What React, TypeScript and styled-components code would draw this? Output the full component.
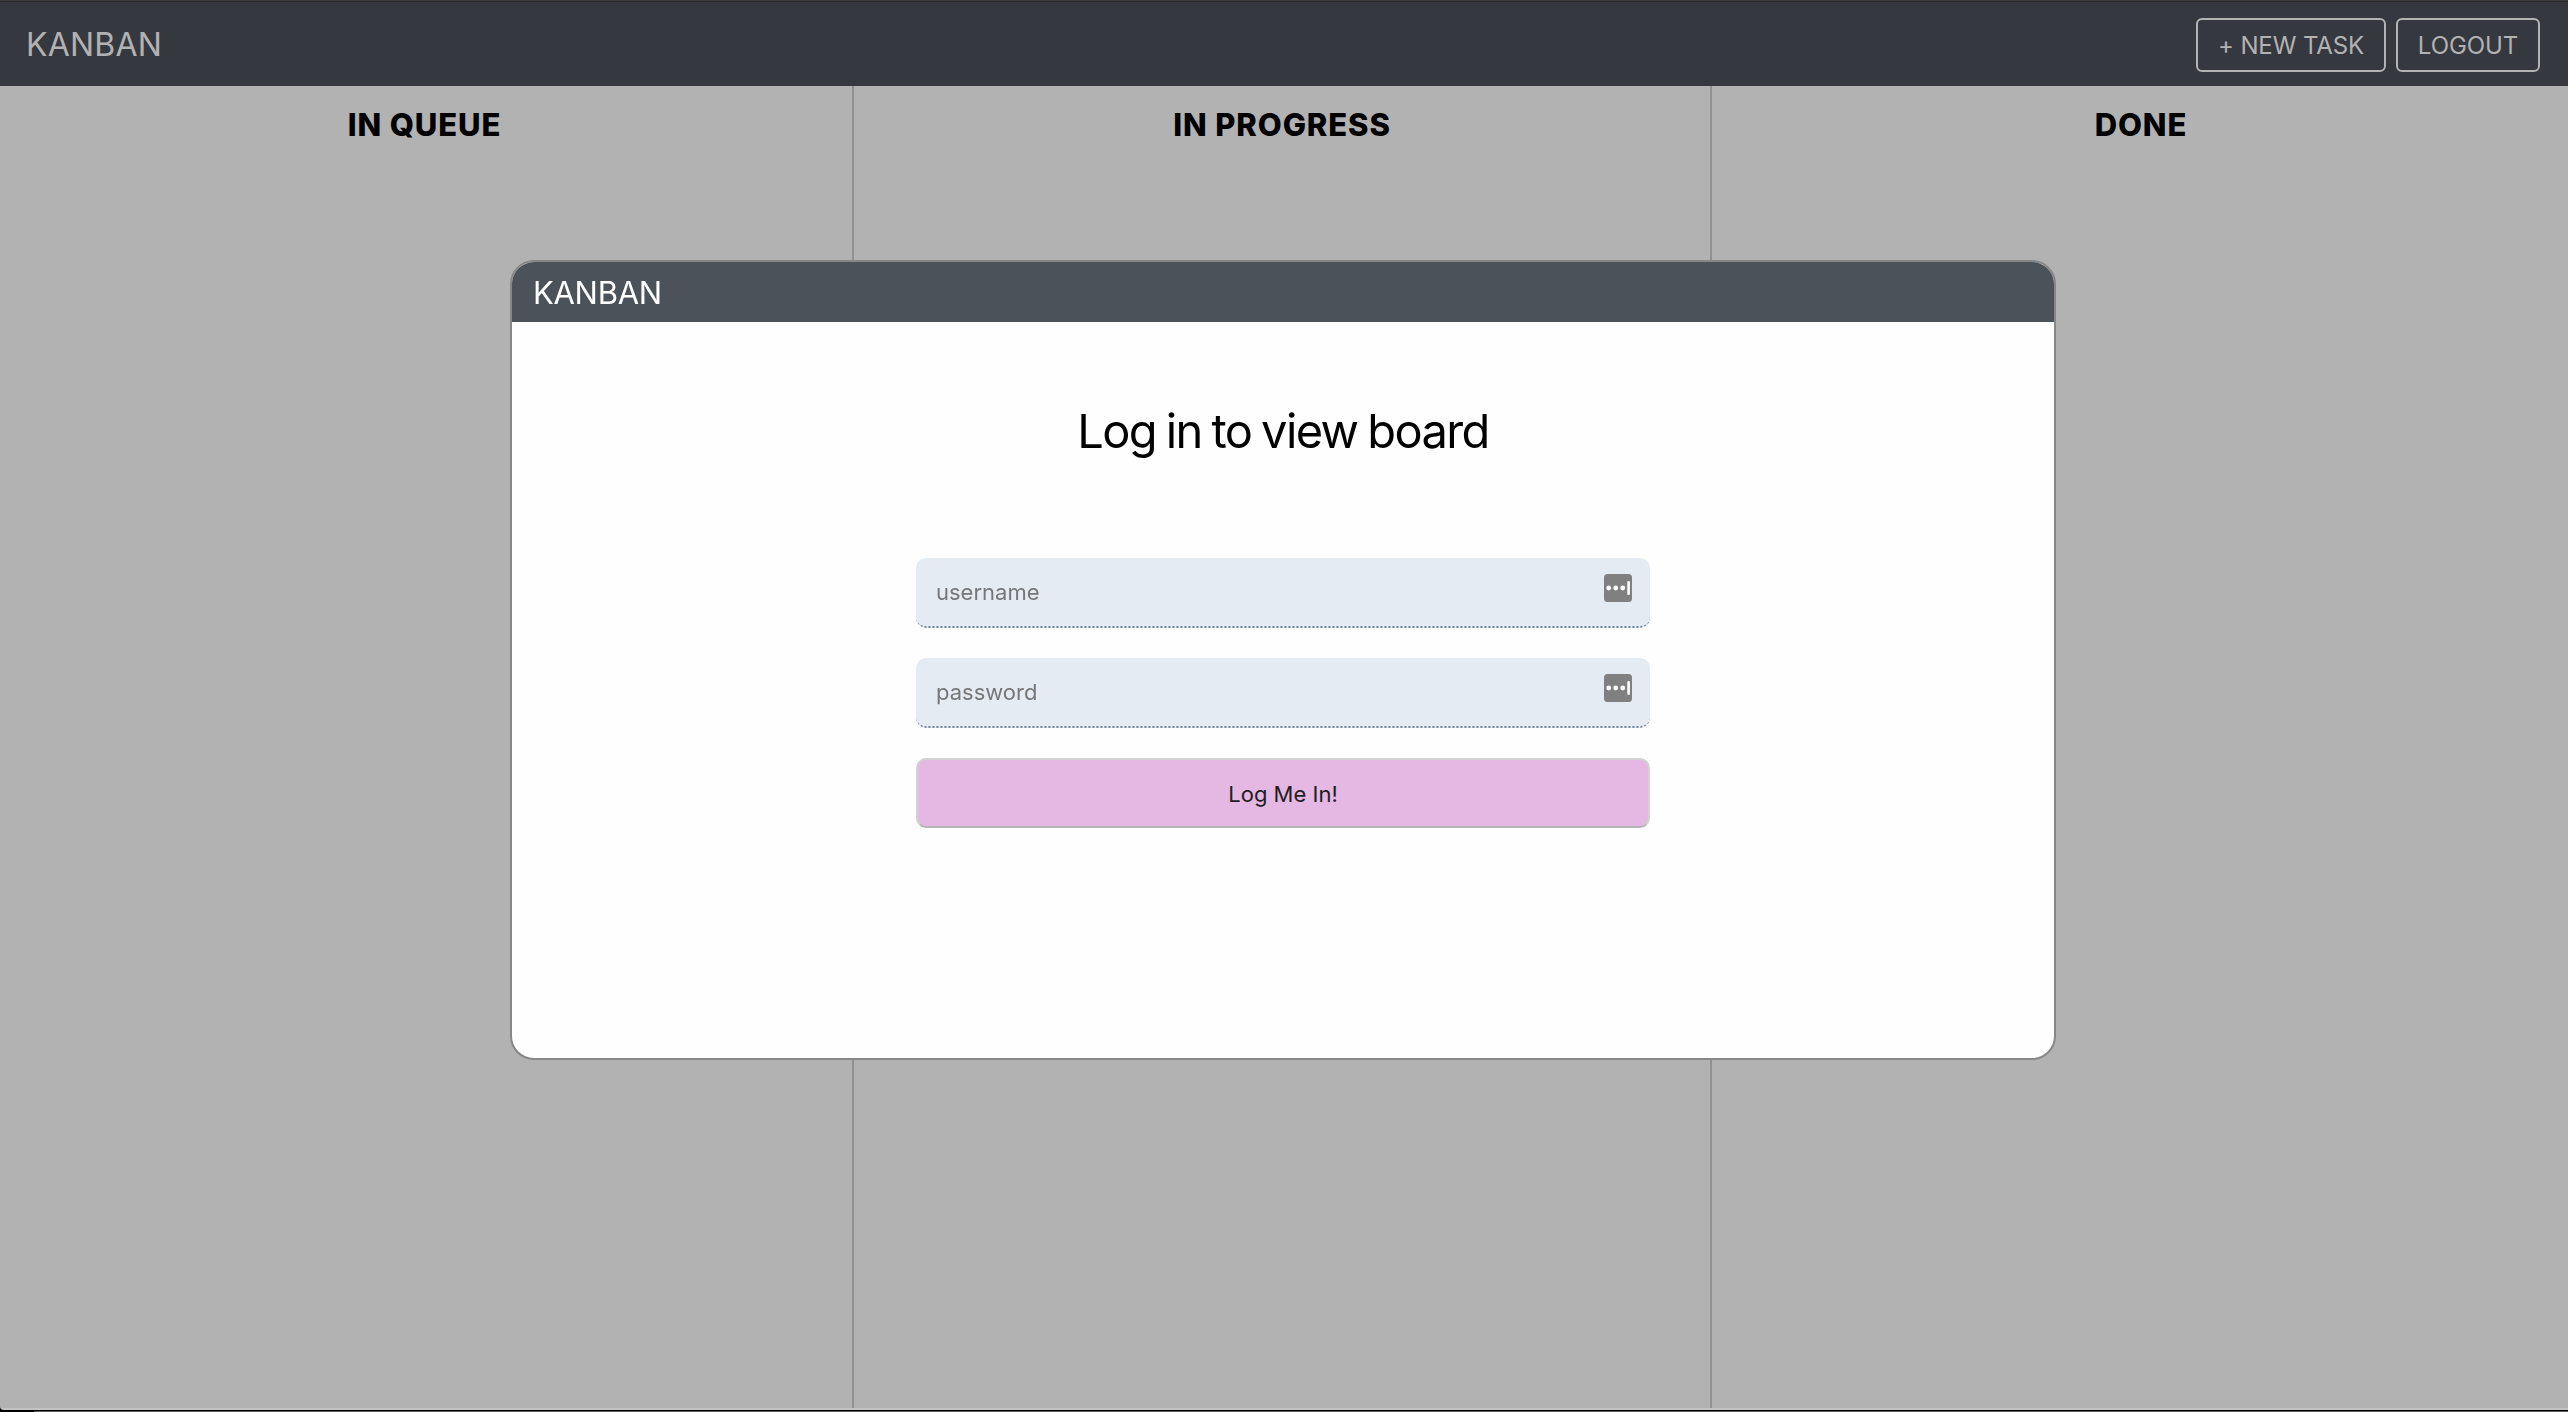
import React from "react";
import styled, { createGlobalStyle } from "styled-components";

const GlobalStyle = createGlobalStyle`
  * { box-sizing: border-box; }
  body { margin: 0; background: #b2b2b2; font-family: Inter, "Liberation Sans", sans-serif; }
  button, input { font: inherit; margin: 0; }
`;

const Page = styled.div`
  display: flex;
  flex-direction: column;
  height: 1412px;
  overflow: hidden;
  border-top: 1px solid #3a3a3a;
  background: #000;
`;

const NavBar = styled.header`
  display: flex;
  align-items: center;
  justify-content: space-between;
  flex: none;
  height: 85px;
  padding: 2px 28px 0 26px;
  background: #363840;
  border-top: 1px solid #2a2a2a;
`;

const Brand = styled.span`
  font-size: 32px;
  line-height: 40px;
  letter-spacing: 0.2px;
  color: #b2b2b2;
`;

const Actions = styled.div`
  display: flex;
  gap: 10px;
`;

const NavButton = styled.button<{ $width: number }>`
  width: ${(p) => p.$width}px;
  height: 54px;
  padding: 1px 0 0;
  border: 2px solid #b2b2b2;
  border-radius: 6px;
  background: transparent;
  color: #b2b2b2;
  font-size: 24px;
  letter-spacing: -0.1px;
  white-space: nowrap;
`;

const Board = styled.main`
  display: grid;
  grid-template-columns: 854px 858px 1fr;
  flex: 1;
  background: #b2b2b2;
  border-bottom: 2px solid #c2c2c2;
  border-bottom-left-radius: 4px;
`;

const PageEdge = styled.footer`
  flex: none;
  height: 2px;
  margin-left: 34px;
  border-top: 1px solid #000;
  background: #5c5858;
`;

const Column = styled.section`
  border-right: 2px solid #919191;
  padding-top: 19px;

  &:first-child {
    padding-right: 3px;
  }

  &:last-child {
    border-right: 0;
    padding-left: 2px;
  }
`;

const ColumnTitle = styled.h2`
  margin: 0;
  text-align: center;
  font-size: 31px;
  font-weight: 800;
  line-height: 40px;
  letter-spacing: 0.9px;
`;

const Dialog = styled.div`
  position: fixed;
  top: 260px;
  left: 510px;
  display: flex;
  flex-direction: column;
  width: 1546px;
  height: 800px;
  overflow: hidden;
  border: 2px solid #878787;
  border-radius: 24px;
  background: #fefefe;
`;

const DialogHeader = styled.div`
  flex: none;
  height: 60px;
  padding: 1px 20px 0 21px;
  background: #4c525a;
  color: #fff;
  font-size: 31px;
  line-height: 60px;
  letter-spacing: -0.3px;
`;

const DialogTitle = styled.h1`
  margin: 79px 0 0;
  text-align: center;
  font-size: 47px;
  font-weight: 400;
  line-height: 60px;
  letter-spacing: -1.6px;
  word-spacing: -1.9px;
`;

const Form = styled.form`
  display: flex;
  flex-direction: column;
  gap: 30px;
  width: 734px;
  margin: 97px auto 0;
`;

const Field = styled.label`
  display: flex;
  align-items: center;
  height: 70px;
  padding: 0 18px 0 20px;
  border-bottom: 2px dotted #73849a;
  border-radius: 10px;
  background: #e5ebf3;
`;

const Input = styled.input`
  flex: 1;
  min-width: 0;
  padding: 0;
  border: 0;
  outline: 0;
  background: transparent;
  font-size: 22px;
  letter-spacing: 0;

  &::placeholder {
    color: #777;
    opacity: 1;
  }
`;

const KeyIcon = styled.svg`
  flex: none;
  width: 28px;
  height: 28px;
  margin-bottom: 8px;
`;

const Submit = styled.button`
  height: 70px;
  padding: 2px 0 0;
  border: 2px solid #d1d1d1;
  border-bottom-color: #b5b5b5;
  border-radius: 10px;
  background: #e4b8e2;
  color: #231c23;
  font-size: 22px;
  letter-spacing: 0;
`;

const PasswordManagerIcon = () => (
  <KeyIcon viewBox="0 0 28 28">
    <rect width="28" height="28" rx="3.5" fill="#808080" />
    <circle cx="4.7" cy="14" r="2.4" fill="#fff" />
    <circle cx="11.7" cy="14" r="2.4" fill="#fff" />
    <circle cx="18.7" cy="14" r="2.4" fill="#fff" />
    <rect x="23.3" y="7" width="2.6" height="14" rx="1.2" fill="#fff" />
  </KeyIcon>
);

const fields = [
  { name: "username", type: "text" },
  { name: "password", type: "password" },
];

export default function App() {
  return (
    <>
      <GlobalStyle />
      <Page>
        <NavBar>
          <Brand>KANBAN</Brand>
          <Actions>
            <NavButton $width={190}>+ NEW TASK</NavButton>
            <NavButton $width={144}>LOGOUT</NavButton>
          </Actions>
        </NavBar>
        <Board>
          <Column>
            <ColumnTitle>IN QUEUE</ColumnTitle>
          </Column>
          <Column>
            <ColumnTitle>IN PROGRESS</ColumnTitle>
          </Column>
          <Column>
            <ColumnTitle>DONE</ColumnTitle>
          </Column>
        </Board>
        <PageEdge />
      </Page>
      <Dialog role="dialog">
        <DialogHeader>KANBAN</DialogHeader>
        <DialogTitle>Log in to view board</DialogTitle>
        <Form>
          {fields.map((f) => (
            <Field key={f.name}>
              <Input name={f.name} type={f.type} placeholder={f.name} />
              <PasswordManagerIcon />
            </Field>
          ))}
          <Submit type="button">Log Me In!</Submit>
        </Form>
      </Dialog>
    </>
  );
}
